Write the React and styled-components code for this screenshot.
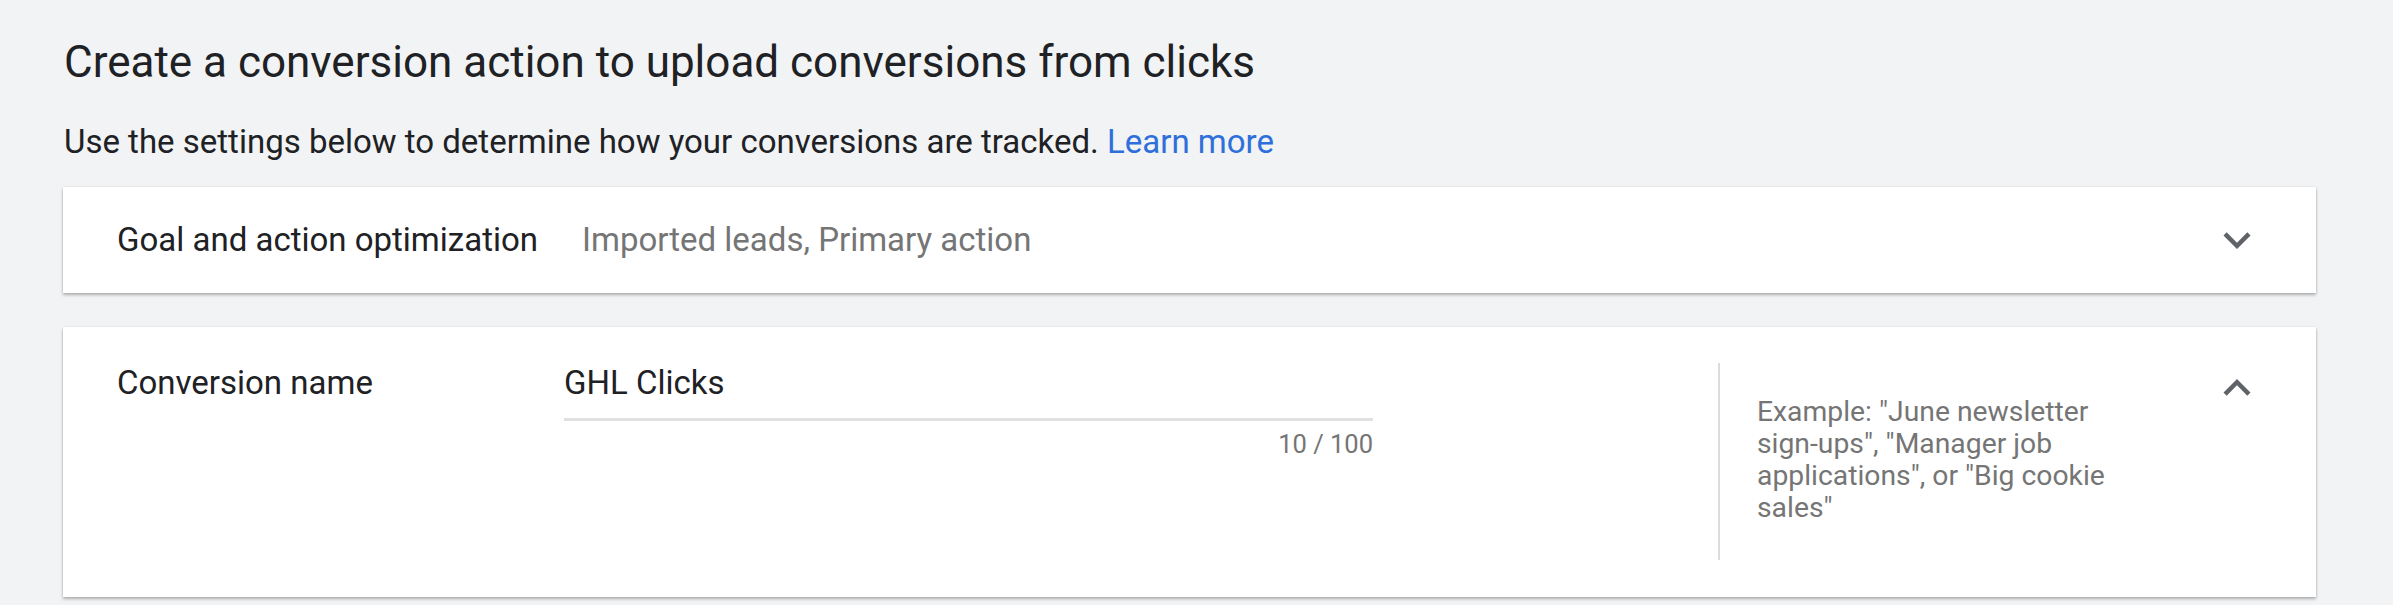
import React from 'react'
import styled, { createGlobalStyle } from 'styled-components'

const GlobalStyle = createGlobalStyle`
  html, body {
    margin: 0;
    padding: 0;
    background: #f1f3f4;
  }
  body {
    font-family: Roboto, 'Liberation Sans', sans-serif;
    color: #202124;
  }
`

const Page = styled.div`
  padding: 36px 77px 0 63px;
  box-sizing: border-box;
  width: 2393px;
  height: 605px;
  overflow: hidden;
`

const Title = styled.h1`
  font-size: 44px;
  font-weight: 400;
  line-height: 52px;
  margin: 0 0 0 1px;
`

const Intro = styled.p`
  font-size: 33px;
  line-height: 44px;
  margin: 32px 0 23px 1px;
`

const Link = styled.a`
  color: #2f6fdb;
  text-decoration: none;
`

const Card = styled.section`
  background: #fff;
  box-shadow: 0 2px 3px rgba(0, 0, 0, 0.28), 0 0 2px rgba(0, 0, 0, 0.1);
  display: flex;
  align-items: ${(p) => (p.$open ? 'flex-start' : 'center')};
  height: ${(p) => p.$height}px;
  padding-left: 54px;
  padding-right: 52px;
  box-sizing: border-box;
  margin-bottom: 34px;
`

const Label = styled.div`
  width: ${(p) => p.$width}px;
  flex: none;
  font-size: 33px;
  line-height: 44px;
  padding-top: ${(p) => (p.$open ? 34 : 0)}px;
`

const Summary = styled.div`
  flex: 1;
  font-size: 33px;
  line-height: 44px;
  color: #757575;
`

const Field = styled.div`
  width: 809px;
  flex: none;
  padding-top: 34px;
`

const Input = styled.div`
  font-size: 33px;
  line-height: 44px;
  color: #202124;
  padding-bottom: 13px;
  border-bottom: 3px solid #e0e0e0;
`

const Counter = styled.div`
  text-align: right;
  font-size: 25.5px;
  line-height: 30px;
  margin-top: 8px;
  color: #757575;
`

const Hint = styled.div`
  margin-left: 345px;
  margin-top: 36px;
  height: 197px;
  box-sizing: border-box;
  border-left: 2px solid #dadce0;
  padding: 33px 0 0 37px;
  width: 411px;
  font-size: 28.3px;
  line-height: 32px;
  color: #757575;
`

const Toggle = styled.button`
  margin-left: auto;
  margin-top: ${(p) => p.$top}px;
  width: 54px;
  height: 54px;
  padding: 0;
  border: 0;
  background: none;
  display: flex;
  align-items: center;
  justify-content: center;
  color: #5f6368;
`

const Chevron = ({ up }) => (
  <svg width='54' height='54' viewBox='0 0 24 24'>
    <path
      fill='currentColor'
      d='M16.59 8.59L12 13.17 7.41 8.59 6 10l6 6 6-6z'
      transform={up ? 'rotate(180 12 12)' : undefined}
    />
  </svg>
)

const App = () => {
  return (
    <Page>
      <GlobalStyle />
      <Title>Create a conversion action to upload conversions from clicks</Title>
      <Intro>
        Use the settings below to determine how your conversions are tracked.{' '}
        <Link href='#'>Learn more</Link>
      </Intro>
      <Card $height={106}>
        <Label $width={465}>Goal and action optimization</Label>
        <Summary>Imported leads, Primary action</Summary>
        <Toggle $top={0}>
          <Chevron />
        </Toggle>
      </Card>
      <Card $height={270} $open>
        <Label $width={447} $open>
          Conversion name
        </Label>
        <Field>
          <Input>GHL Clicks</Input>
          <Counter>10 / 100</Counter>
        </Field>
        <Hint>
          Example: "June newsletter sign-ups", "Manager job applications", or
          "Big cookie sales"
        </Hint>
        <Toggle $top={34}>
          <Chevron up />
        </Toggle>
      </Card>
    </Page>
  )
}

export default App
